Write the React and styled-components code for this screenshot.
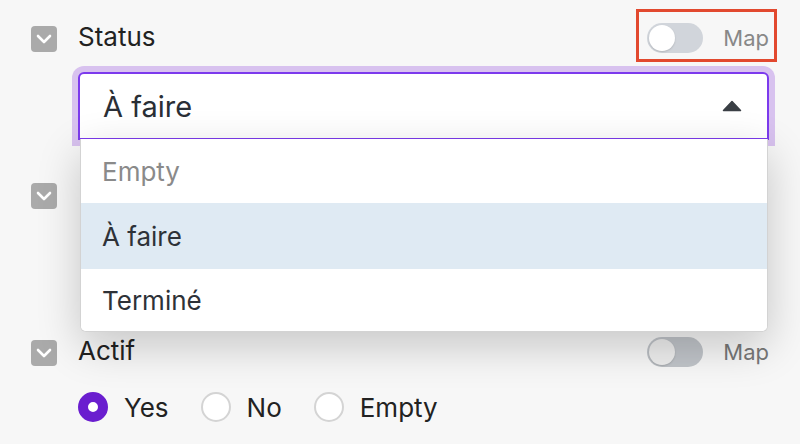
import React from "react";
import styled, { createGlobalStyle } from "styled-components";

const Global = createGlobalStyle`
  html, body { margin: 0; padding: 0; background: #f7f7f7; }
  body { font-family: Inter, "Noto Sans", sans-serif; color: #222; overflow: hidden; }
`;

const Page = styled.div`
  width: 800px;
  height: 444px;
  box-sizing: border-box;
  padding: 23px 31px 0 31px;
  display: flex;
  flex-direction: column;
  gap: 40px;
`;

const Field = styled.div`
  display: flex;
  flex-direction: column;
  gap: ${(p) => p.$gap || 19}px;
`;

const LabelRow = styled.div`
  display: flex;
  align-items: center;
  height: 30px;
`;

const Check = styled.span`
  width: 26px;
  height: 26px;
  border-radius: 4px;
  background: #aaaaaa;
  display: flex;
  align-items: center;
  justify-content: center;
  flex: none;
  margin-top: 2px;
`;

const Label = styled.span`
  margin-left: 21px;
  margin-top: -3px;
  font-size: 26px;
  color: #222;
  flex: 1;
`;

const MapGroup = styled.div`
  position: relative;
  display: flex;
  align-items: center;
  gap: 20px;
  &::after {
    content: "";
    display: ${(p) => (p.$marked ? "block" : "none")};
    position: absolute;
    left: -11px;
    right: -8px;
    top: -14px;
    bottom: -9px;
    border: 3px solid #e2492f;
  }
`;

const Toggle = styled.span`
  width: 56px;
  height: 30px;
  border-radius: 15px;
  background: ${(p) => (p.$dim ? "#c0c4c9" : "#d1d5db")};
  position: relative;
  flex: none;
  &::before {
    content: "";
    position: absolute;
    left: 2px;
    top: 2px;
    width: 26px;
    height: 26px;
    border-radius: 50%;
    background: ${(p) => (p.$dim ? "#eeeeee" : "#fff")};
    box-shadow: 0 1px 2px rgba(0, 0, 0, 0.15);
  }
`;

const MapText = styled.span`
  font-size: 22px;
  color: ${(p) => (p.$dim ? "#777" : "#888")};
`;

const SelectWrap = styled.div`
  position: relative;
  margin-left: 47px;
  z-index: 2;
`;

const SelectBox = styled.div`
  height: 68px;
  box-sizing: border-box;
  border: 2px solid #7c3aed;
  border-radius: 6px 6px 0 0;
  background: #fff;
  box-shadow: 0 0 0 6px #d8c2ef;
  display: flex;
  align-items: center;
  padding: 0 25px 0 23px;
`;

const SelectText = styled.span`
  flex: 1;
  font-size: 29px;
  color: #2a2f36;
`;

const Menu = styled.div`
  position: absolute;
  left: 2px;
  right: 1px;
  top: 67px;
  background: #fff;
  border-radius: 0 0 6px 6px;
  border: 1px solid #d3d3d3;
  border-top: none;
  box-shadow: 0 14px 44px rgba(0, 0, 0, 0.2);
  overflow: hidden;
`;

const Option = styled.div`
  height: ${(p) => p.$h || 64}px;
  display: flex;
  align-items: center;
  padding-left: 21px;
  font-size: 26px;
  color: ${(p) => (p.$muted ? "#8a8a8a" : "#2e3238")};
  background: ${(p) => (p.$active ? "#dfeaf3" : "#fff")};
`;

const Blank = styled.div`
  height: 68px;
`;

const RadioRow = styled.div`
  display: flex;
  align-items: center;
  margin-left: 47px;
  height: 30px;
`;

const RadioItem = styled.label`
  display: flex;
  align-items: center;
  gap: 16px;
  margin-right: 32px;
  font-size: 26px;
  color: #222;
`;

const Radio = styled.span`
  width: 30px;
  height: 30px;
  box-sizing: border-box;
  border-radius: 50%;
  background: #fff;
  border: ${(p) => (p.$on ? "10px solid #6a1ecf" : "2px solid #d4d4d4")};
  flex: none;
`;

const Chevron = () => (
  <svg width="16" height="10" viewBox="0 0 16 10">
    <path d="M2 2l6 6 6-6" fill="none" stroke="#fff" strokeWidth="2.6" strokeLinecap="round" strokeLinejoin="round" />
  </svg>
);

const Caret = () => (
  <svg width="20" height="12" viewBox="0 0 20 12">
    <path d="M10 1.5L18.5 10.5H1.5Z" fill="#3a3f45" stroke="#3a3f45" strokeWidth="1.5" strokeLinejoin="round" />
  </svg>
);

export default function App() {
  return (
    <>
      <Global />
      <Page>
        <Field>
          <LabelRow>
            <Check><Chevron /></Check>
            <Label>Status</Label>
            <MapGroup $marked>
              <Toggle />
              <MapText>Map</MapText>
            </MapGroup>
          </LabelRow>
          <SelectWrap>
            <SelectBox>
              <SelectText>À faire</SelectText>
              <Caret />
            </SelectBox>
            <Menu>
              <Option $muted>Empty</Option>
              <Option $active $h={66}>À faire</Option>
              <Option $h={62}>Terminé</Option>
            </Menu>
          </SelectWrap>
        </Field>
        <Field>
          <LabelRow>
            <Check><Chevron /></Check>
          </LabelRow>
          <Blank />
        </Field>
        <Field $gap={25}>
          <LabelRow>
            <Check><Chevron /></Check>
            <Label>Actif</Label>
            <MapGroup>
              <Toggle $dim />
              <MapText $dim>Map</MapText>
            </MapGroup>
          </LabelRow>
          <RadioRow>
            <RadioItem><Radio $on />Yes</RadioItem>
            <RadioItem><Radio />No</RadioItem>
            <RadioItem><Radio />Empty</RadioItem>
          </RadioRow>
        </Field>
      </Page>
    </>
  );
}
